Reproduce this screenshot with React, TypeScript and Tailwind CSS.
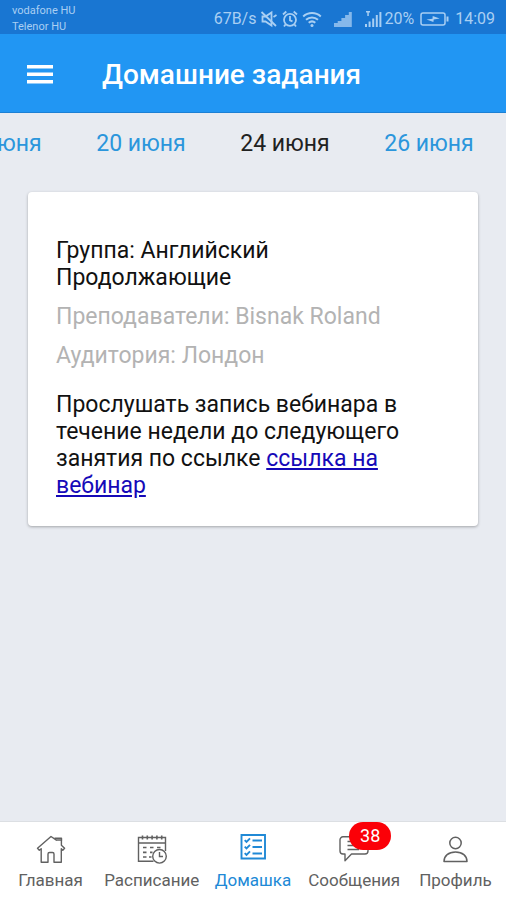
import type { ReactNode } from "react";
import clsx from "clsx";

const dates = ["17 июня", "20 июня", "24 июня", "26 июня"];
const selectedDate = "24 июня";

const HomeIcon = () => (
  <svg width="30" height="30" viewBox="0 0 30 30" fill="none" stroke="currentColor" strokeWidth="1.4" strokeLinejoin="round">
    <path d="M15 2.5 1.5 14.3l1.8 2 1.9-1.5v13.4h6.8v-8.200q0-1.500 1.500-1.500h3q1.500 0 1.500 1.500v8.200h7.300V14.8l1.500 1.500 1.800-2-3.200-3V6h-5v.2L15 2.500Z" />
    <path d="M18.500 4.300h7V6.500" />
  </svg>
);

const CalendarIcon = () => (
  <svg width="30" height="30" viewBox="0 0 30 30" fill="none" stroke="currentColor" strokeWidth="1.4">
    <path d="M16.5 27.3H1.500V3.500h27V17M1.500 9h27" />
    <path d="M5.500 1.500v4M10.300 1.500v4M15.100 1.500v4M19.900 1.500v4M24.700 1.500v4" strokeWidth="1.600" />
    <path d="M6 13.500h3.500M13 13.500h3.500M20 13.500h3.500M6 18.300h3.500M13 18.300h2.500M6 23h3.500M12 23h2.500" strokeWidth="1.7" />
    <circle cx="22.5" cy="22.300" r="6.8" fill="white" />
    <path d="M22.5 18v4.5h3.5" />
  </svg>
);

const ChecklistIcon = () => (
  <svg width="30" height="30" viewBox="0 0 30 30" fill="none" stroke="currentColor" strokeWidth="1.9">
    <path d="M3.500 1h23.500v23.500H3.500z" />
    <path d="m6.700 6.200 1.800 1.800 3.500-3.600M6.700 12.700l1.800 1.800 3.500-3.600M6.700 19.200l1.800 1.800 3.500-3.600" />
    <path d="M14.500 6.500H24M14.500 13H24M14.500 19.500H24" strokeWidth="2" />
  </svg>
);

const ChatIcon = () => (
  <svg width="30" height="30" viewBox="0 0 30 30" fill="none" stroke="currentColor" strokeWidth="1.4" strokeLinejoin="round">
    <path d="M4 2.8h22a3 3 0 0 1 3 3V17a3 3 0 0 1-3 3H12.5L6 26.8V20H4a3 3 0 0 1-3-3V5.800a3 3 0 0 1 3-3Z" />
    <path d="M8.500 7.500H22M8.500 11.500H22M8.500 15.500H20" />
  </svg>
);

const ProfileIcon = () => (
  <svg width="30" height="30" viewBox="0 0 30 30" fill="none" stroke="currentColor" strokeWidth="1.500" strokeLinejoin="round">
    <circle cx="15.500" cy="9" r="5.700" />
    <path d="M4 27.500c0-5.500 4.500-9.500 11.500-9.500S27 22 27 27.500Z" />
  </svg>
);

type NavItem = { label: string; icon: ReactNode; active?: boolean; badge?: number };

const navItems: NavItem[] = [
  { label: "Главная", icon: <HomeIcon /> },
  { label: "Расписание", icon: <CalendarIcon /> },
  { label: "Домашка", icon: <ChecklistIcon />, active: true },
  { label: "Сообщения", icon: <ChatIcon />, badge: 38 },
  { label: "Профиль", icon: <ProfileIcon /> },
];

const StatusBar = () => (
  <div className="flex h-[34px] items-center justify-between bg-[#1976d2] pt-[3px] pr-[11px] pl-3 text-[#a9cff3]">
    <div className="text-[11px] leading-4">
      <p>vodafone HU</p>
      <p>Telenor HU</p>
    </div>
    <div className="flex items-center text-base">
      <span>67B/s</span>
      {/* muted */}
      <svg className="ml-1" width="18" height="18" viewBox="0 0 18 18" fill="none" stroke="currentColor" strokeWidth="1.8">
        <path d="M2.500 6.500h3l6-4v13l-6-4h-3z" />
        <path d="m1.500 2 14.500 14M13.500 7l3-2" />
      </svg>
      {/* alarm */}
      <svg className="ml-1" width="16" height="18" viewBox="0 0 16 18" fill="none" stroke="currentColor" strokeWidth="1.800">
        <circle cx="8" cy="9.800" r="6" />
        <path d="M8 6v4.300l2.500 1M1 4.500l3.300-3M15 4.500l-3.300-3M3.500 14.500 2 16.500M12.500 14.500l1.500 2" />
      </svg>
      {/* wifi */}
      <svg className="ml-1" width="20" height="18" viewBox="0 0 20 18" fill="none" stroke="currentColor" strokeWidth="2">
        <path d="M1.200 6.500a13 13 0 0 1 17.600 0M4 9.800a9 9 0 0 1 12 0M6.700 12.800a5 5 0 0 1 6.600 0" />
        <circle cx="10" cy="15.500" r="1.500" fill="currentColor" stroke="none" />
      </svg>
      <svg className="ml-3" width="18" height="18" viewBox="0 0 18 18" fill="currentColor">
        <path d="M0 13h3.700v4H0zM3.700 11h3.700v6H3.700zM7.400 8h3.700v9H7.400zM11.100 5h3.700v12h-3.700zM14.800 2h3v15h-3z" opacity=".75" />
      </svg>
      <svg className="ml-3" width="18" height="18" viewBox="0 0 18 18" fill="currentColor">
        <path d="M1 14h2v3H1zM4.600 11.500h2V17h-2zM8.200 8.500h2V17h-2zM11.800 5h2v12h-2zM15.400 2h2v15h-2zM2 1h4v1.500H4.800V6H3.300V2.500H2z" />
      </svg>
      <span className="ml-0.5">20%</span>
      <svg className="ml-1.5" width="29" height="16" viewBox="0 0 29 16" fill="none" stroke="currentColor" strokeWidth="1.500">
        <rect x="1" y="2" width="24" height="12" rx="2" />
        <path d="M27.500 5.500v5" strokeWidth="2" />
        <path d="m6.500 8.600 6-.8.200-2.800 7 2.600-6 .8-.300 2.600z" fill="currentColor" stroke="none" />
      </svg>
      <time className="ml-1.5">14:09</time>
    </div>
  </div>
);

const App = () => {
  return (
    <div className="flex min-h-screen flex-col bg-[#e8ebf1] font-[Roboto,sans-serif]">
      <StatusBar />

      <header className="flex h-[79px] items-center border-b border-[#1c80d4] bg-[#2196f3] px-[27px] pt-[3px] text-white">
        <button type="button" aria-label="Меню">
          <svg width="26" height="20" viewBox="0 0 26 20" fill="currentColor">
            <path d="M0 0h26v3.500H0zM0 7.500h26V11H0zM0 15h26v3.500H0z" />
          </svg>
        </button>
        <h1 className="ml-[49px] text-[28px] font-medium">Домашние задания</h1>
      </header>

      <nav className="flex h-[60px] justify-end overflow-hidden pt-0.5 pr-[5px]">
        {dates.map((date) => (
          <button
            key={date}
            type="button"
            className={clsx("w-36 shrink-0 text-[23px]", date === selectedDate ? "text-[#212121]" : "text-[#2b96dc]")}
          >
            {date}
          </button>
        ))}
      </nav>

      <main className="flex-1 px-7 pt-[19px] pb-7">
        <article className="rounded-sm bg-white px-7 pt-[45px] pb-[27px] text-[23px] leading-[27px] text-[#111] shadow-[0_1px_3px_rgba(0,0,0,0.3)]">
          <h2 className="max-w-[260px]">Группа: Английский Продолжающие</h2>
          <p className="mt-3 text-[#b3b3b3]">Преподаватели: Bisnak Roland</p>
          <p className="mt-3 text-[#b3b3b3]">Аудитория: Лондон</p>
          <p className="mt-[22px] max-w-[350px]">
            Прослушать запись вебинара в течение недели до следующего занятия по ссылке{" "}
            <a href="#" className="text-[#1509b8] underline">
              ссылка на вебинар
            </a>
          </p>
        </article>
      </main>

      <footer className="border-t border-[#dcdfe3] bg-white">
        <nav className="flex">
          {navItems.map((item) => (
            <a
              key={item.label}
              href="#"
              className={clsx(
                "flex flex-1 basis-0 flex-col items-center pt-3 pb-2 text-[17px] leading-6",
                item.active ? "text-[#2089d6]" : "text-[#616161]"
              )}
            >
              <span className="relative mb-1">
                {item.icon}
                {item.badge && (
                  <span className="absolute -top-3 left-2.5 flex h-7 w-[42px] items-center justify-center rounded-full bg-[#fb0007] text-lg text-white">
                    {item.badge}
                  </span>
                )}
              </span>
              {item.label}
            </a>
          ))}
        </nav>
      </footer>
    </div>
  );
};

export default App;
